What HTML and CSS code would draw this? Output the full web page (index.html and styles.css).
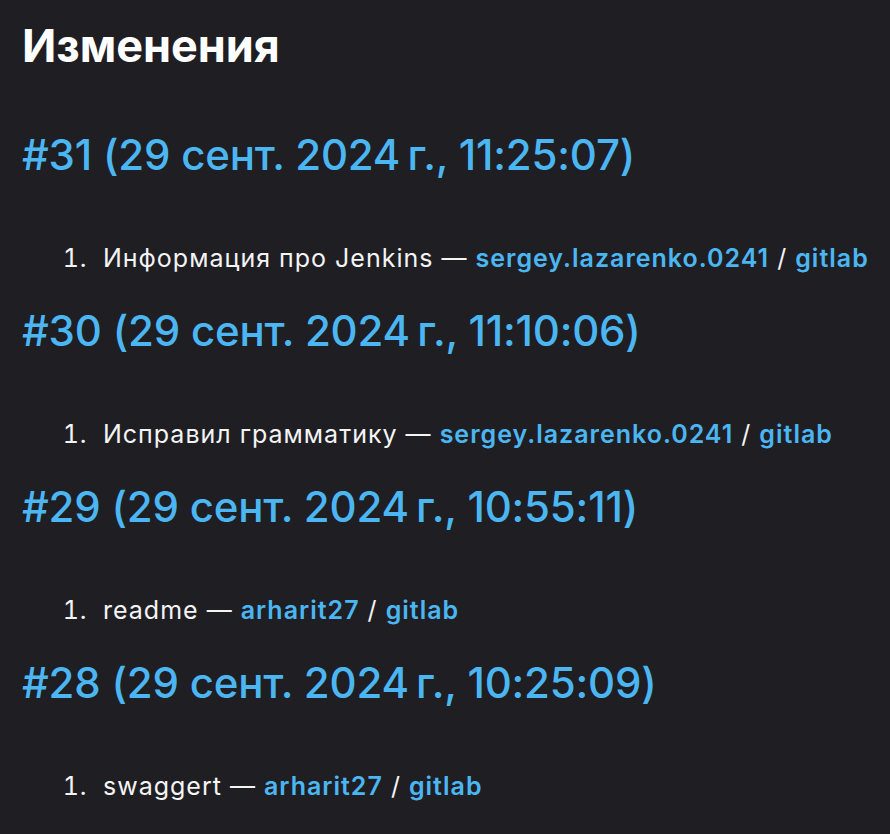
FILE: index.html
```html
<!DOCTYPE html>
<html lang="ru">
<head>
<meta charset="utf-8">
<title>Изменения</title>
<link rel="stylesheet" href="styles.css">
</head>
<body>
<main class="page">
  <h1 class="title">Изменения</h1>

  <section class="build">
    <h2 class="build-title"><a href="#">#31 (29 сент. 2024&#8239;г., 11:25:07)</a></h2>
    <ol class="changes">
      <li>Информация про Jenkins — <a href="#">sergey.lazarenko.0241</a> / <a href="#">gitlab</a></li>
    </ol>
  </section>

  <section class="build">
    <h2 class="build-title"><a href="#">#30 (29 сент. 2024&#8239;г., 11:10:06)</a></h2>
    <ol class="changes">
      <li>Исправил грамматику — <a href="#">sergey.lazarenko.0241</a> / <a href="#">gitlab</a></li>
    </ol>
  </section>

  <section class="build">
    <h2 class="build-title"><a href="#">#29 (29 сент. 2024&#8239;г., 10:55:11)</a></h2>
    <ol class="changes">
      <li>readme — <a href="#">arharit27</a> / <a href="#">gitlab</a></li>
    </ol>
  </section>

  <section class="build">
    <h2 class="build-title"><a href="#">#28 (29 сент. 2024&#8239;г., 10:25:09)</a></h2>
    <ol class="changes">
      <li>swaggert — <a href="#">arharit27</a> / <a href="#">gitlab</a></li>
    </ol>
  </section>
</main>
</body>
</html>
```

FILE: styles.css
```css
html, body {
  margin: 0;
  padding: 0;
  background: #1f1f23;
}

body {
  font-family: Inter, "Noto Sans", "Liberation Sans", sans-serif;
  color: #f4f4f5;
}

.page {
  padding: 19px 4px 0 22px;
}

a {
  color: #4bb6f2;
  text-decoration: none;
}

.title {
  margin: 0;
  font-size: 45px;
  line-height: 54px;
  font-weight: 700;
  color: #ffffff;
}

.build-title {
  margin: 0;
  font-size: 42px;
  line-height: 50px;
  font-weight: 500;
  letter-spacing: -0.2px;
}

.title + .build .build-title {
  margin-top: 57px;
}

.build + .build .build-title {
  margin-top: 33px;
}

.changes {
  margin: 64px 0 0;
  padding-left: 81px;
  font-size: 25px;
  line-height: 29px;
  letter-spacing: 1px;
  white-space: nowrap;
}

.changes li::marker {
  content: counter(list-item) ".\00a0\00a0";
  letter-spacing: 1px;
}

.changes a {
  font-weight: 600;
}
```
